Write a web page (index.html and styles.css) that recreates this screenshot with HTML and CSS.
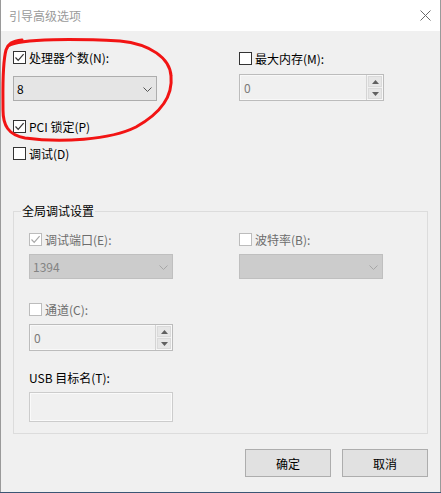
FILE: index.html
```html
<!DOCTYPE html>
<html lang="zh-CN">
<head>
<meta charset="utf-8">
<title>引导高级选项</title>
<link rel="stylesheet" href="styles.css">
</head>
<body>
<div class="window">
  <div class="titlebar">
    <span class="title">引导高级选项</span>
    <svg class="close" width="11" height="11" viewBox="0 0 11 11"><path d="M0.5 0.5 L10.5 10.5 M10.5 0.5 L0.5 10.5" stroke="#6a6a6a" stroke-width="1" fill="none"/></svg>
  </div>
  <div class="content">
    <div class="top">
      <div class="col">
        <label class="chk"><span class="box"><svg width="11" height="11" viewBox="0 0 11 11"><path d="M1.5 5.5 L4.2 8.3 L9.6 2.2" stroke="#333" stroke-width="1.2" fill="none"/></svg></span>处理器个数(N):</label>
        <div class="combo c-cpu"><span>8</span><svg class="chev" width="9" height="5" viewBox="0 0 9 5"><path d="M0.5 0.5 L4.5 4.5 L8.5 0.5" stroke="#555" fill="none"/></svg></div>
        <label class="chk c-pci"><span class="box"><svg width="11" height="11" viewBox="0 0 11 11"><path d="M1.5 5.5 L4.2 8.3 L9.6 2.2" stroke="#333" stroke-width="1.2" fill="none"/></svg></span>PCI 锁定(P)</label>
        <label class="chk c-debug"><span class="box"></span>调试(D)</label>
      </div>
      <div class="col">
        <label class="chk c-mem"><span class="box"></span>最大内存(M):</label>
        <div class="spin s-mem"><span class="val">0</span><span class="btns"><span class="sb"><svg width="7" height="4" viewBox="0 0 7 4"><path d="M0 4 L3.5 0 L7 4 Z" fill="#606060"/></svg></span><span class="sb"><svg width="7" height="4" viewBox="0 0 7 4"><path d="M0 0 L3.5 4 L7 0 Z" fill="#606060"/></svg></span></span></div>
      </div>
    </div>

    <fieldset class="group">
      <legend>全局调试设置</legend>
      <div class="ginner">
        <div class="col">
          <label class="chk dis"><span class="box"><svg width="11" height="11" viewBox="0 0 11 11"><path d="M1.5 5.5 L4.2 8.3 L9.6 2.2" stroke="#a8a8a8" stroke-width="1.2" fill="none"/></svg></span>调试端口(E):</label>
          <div class="combo dis c-port"><span>1394</span><svg class="chev" width="9" height="5" viewBox="0 0 9 5"><path d="M0.5 0.5 L4.5 4.5 L8.5 0.5" stroke="#a6a6a6" fill="none"/></svg></div>
          <label class="chk dis c-chan"><span class="box"></span>通道(C):</label>
          <div class="spin s-chan"><span class="val">0</span><span class="btns"><span class="sb"><svg width="7" height="4" viewBox="0 0 7 4"><path d="M0 4 L3.5 0 L7 4 Z" fill="#606060"/></svg></span><span class="sb"><svg width="7" height="4" viewBox="0 0 7 4"><path d="M0 0 L3.5 4 L7 0 Z" fill="#606060"/></svg></span></span></div>
          <div class="lbl">USB 目标名(T):</div>
          <div class="textfield"></div>
        </div>
        <div class="col">
          <label class="chk dis"><span class="box"></span>波特率(B):</label>
          <div class="combo dis c-port"><span></span><svg class="chev" width="9" height="5" viewBox="0 0 9 5"><path d="M0.5 0.5 L4.5 4.5 L8.5 0.5" stroke="#a6a6a6" fill="none"/></svg></div>
        </div>
      </div>
    </fieldset>

    <div class="buttons">
      <button class="btn">确定</button>
      <button class="btn">取消</button>
    </div>
  </div>
  <svg class="annot" width="441" height="493" viewBox="0 0 441 493"><path d="M8 46 C20 38, 80 39, 120 41 C150 44, 170 58, 171 76 C173 96, 161 113, 136 127 C110 140, 60 143, 25 138 C8 135, 3 125, 3 110 C3 90, 2 65, 6 50 C8 44, 12 41, 22 40" stroke="#f21414" stroke-width="3" fill="none" stroke-linecap="round"/></svg>
</div>
</body>
</html>
```

FILE: styles.css
```css
html, body {
  margin: 0;
  padding: 0;
}
body {
  background: #3b5674;
  width: 441px;
  height: 493px;
  overflow: hidden;
  font-family: "Noto Sans CJK SC", "Liberation Sans", sans-serif;
  font-size: 12px;
  color: #000;
}
.window {
  position: relative;
  width: 441px;
  height: 492px;
  box-sizing: border-box;
  border-left: 1px solid #9a9a9a;
  border-right: 1px solid #9a9a9a;
  background: #f0f0f0;
}
.titlebar {
  height: 31px;
  background: #fff;
  display: flex;
  align-items: center;
  justify-content: space-between;
  padding: 0 9px 0 8px;
}
.title {
  color: #9a9a9a;
  font-size: 12px;
  line-height: 14px;
}
.close {
  display: block;
}
.content {
  padding: 0 12px;
}
.top {
  display: grid;
  grid-template-columns: 144px 145px;
  column-gap: 82px;
  margin-top: 20px;
  align-items: start;
}
.col {
  display: flex;
  flex-direction: column;
  align-items: flex-start;
}
.chk {
  display: flex;
  align-items: center;
  height: 13px;
  line-height: 13px;
  white-space: nowrap;
}
.box {
  width: 13px;
  height: 13px;
  box-sizing: border-box;
  border: 1px solid #333;
  background: #fff;
  margin-right: 3px;
  display: flex;
  align-items: center;
  justify-content: center;
  flex: none;
}
.box svg {
  display: block;
}
.chk.dis {
  color: #6d6d6d;
}
.chk.dis .box {
  border-color: #bcbcbc;
}
.combo {
  width: 144px;
  height: 25px;
  box-sizing: border-box;
  border: 1px solid #adadad;
  background: #e5e5e5;
  display: flex;
  align-items: center;
  justify-content: space-between;
  padding: 0 4px 0 3px;
}
.combo .chev {
  display: block;
  margin-top: 1px;
}
.combo.dis {
  background: #cccccc;
  border-color: #bfbfbf;
  color: #838383;
}
.c-cpu {
  margin-top: 12px;
}
.c-pci {
  margin-top: 19px;
}
.c-debug {
  margin-top: 14px;
}
.c-mem {
  margin-top: 1px;
}
.spin {
  width: 145px;
  height: 27px;
  box-sizing: border-box;
  border: 1px solid #bcbcbc;
  background: #f0f0f0;
  box-shadow: inset 0 0 0 1px #f8f8f8;
  display: flex;
  align-items: stretch;
  justify-content: space-between;
  color: #7a7a7a;
}
.spin .val {
  padding-left: 4px;
  display: flex;
  align-items: center;
}
.btns {
  width: 17px;
  display: flex;
  flex-direction: column;
  gap: 1px;
  padding: 1px;
  box-sizing: border-box;
  border-left: 1px solid #d4d4d4;
}
.sb {
  flex: 1;
  background: #e6e6e6;
  border: 1px solid #dadada;
  display: flex;
  align-items: center;
  justify-content: center;
}
.sb svg {
  display: block;
}
.s-mem {
  margin-top: 9px;
}
.s-chan {
  width: 144px;
  margin-top: 8px;
}
.group {
  margin: 43px 0 0 0;
  padding: 14px 15px 11px 15px;
  border: 1px solid #dcdcdc;
  width: 415px;
  box-sizing: border-box;
}
.group legend {
  margin-left: -8px;
  padding: 0 1px;
  line-height: 16px;
  font-size: 12px;
}
.ginner {
  display: grid;
  grid-template-columns: 144px 145px;
  column-gap: 66px;
  align-items: start;
}
.c-port {
  margin-top: 8px;
}
.c-chan {
  margin-top: 24px;
}
.lbl {
  margin-top: 20px;
  height: 14px;
  line-height: 14px;
}
.textfield {
  margin-top: 7px;
  width: 144px;
  height: 30px;
  box-sizing: border-box;
  border: 1px solid #cccccc;
  box-shadow: inset 0 0 0 1px #fafafa;
  background: #f0f0f0;
}
.buttons {
  display: flex;
  justify-content: flex-end;
  gap: 11px;
  margin-top: 15px;
}
.btn {
  width: 86px;
  height: 28px;
  box-sizing: border-box;
  border: 1px solid #adadad;
  background: #e1e1e1;
  font-family: "Noto Sans CJK SC", "Liberation Sans", sans-serif;
  font-size: 12px;
  color: #000;
  padding: 0;
  margin: 0;
}
.annot {
  position: absolute;
  left: -1px;
  top: 0;
  pointer-events: none;
}
```
